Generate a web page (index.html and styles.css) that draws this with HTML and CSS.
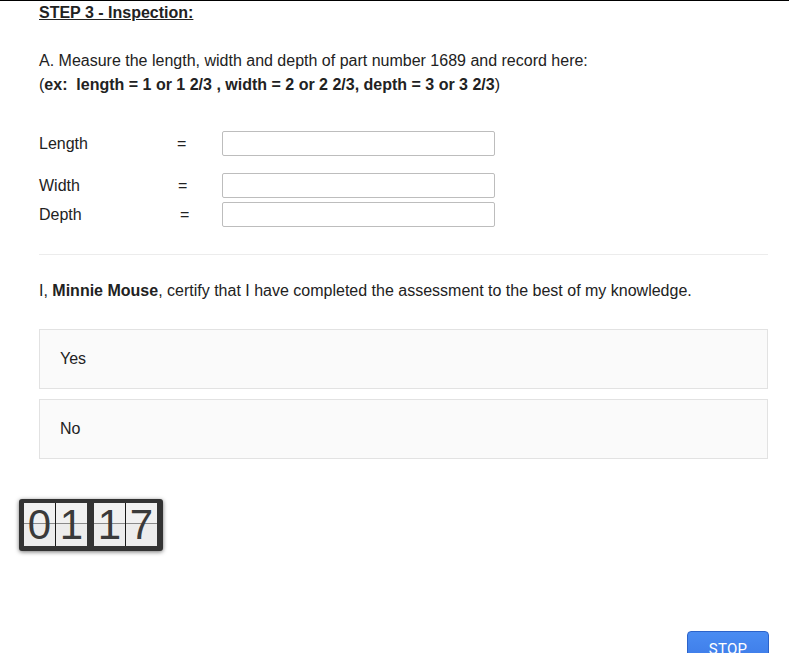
FILE: index.html
```html
<!DOCTYPE html>
<html>
<head>
<meta charset="utf-8">
<link rel="stylesheet" href="styles.css">
</head>
<body>
<div class="page">
  <h3 class="step">STEP 3 - Inspection:</h3>
  <p class="intro">A. Measure the length, width and depth of part number 1689 and record here:<br>(<b>ex:&nbsp; length = 1 or 1 2/3 , width = 2 or 2 2/3, depth = 3 or 3 2/3</b>)</p>

  <div class="row row-length">
    <span class="label">Length</span><span class="eq">=</span><input class="field" type="text">
  </div>
  <div class="row row-width">
    <span class="label">Width</span><span class="eq eq-w">=</span><input class="field" type="text">
  </div>
  <div class="row row-depth">
    <span class="label">Depth</span><span class="eq eq-d">=</span><input class="field" type="text">
  </div>

  <hr class="sep">

  <p class="cert">I, <b>Minnie Mouse</b>, certify that I have completed the assessment to the best of my knowledge.</p>

  <div class="option">Yes</div>
  <div class="option option-no">No</div>

  <div class="timer">
    <div class="group">
      <span class="digit">0</span><span class="digit">1</span>
    </div>
    <div class="group">
      <span class="digit">1</span><span class="digit">7</span>
    </div>
  </div>

  <div class="actions">
    <button class="stop" type="button">STOP</button>
  </div>
</div>
</body>
</html>
```
FILE: styles.css
```css
html, body {
  margin: 0;
  padding: 0;
  background: #fff;
}
body {
  border-top: 1px solid #000;
  font-family: "Liberation Sans", Arial, sans-serif;
  color: #222;
  overflow: hidden;
}
.page {
  padding: 0 21px 0 39px;
}
.step {
  margin: 3px 0 0;
  font-size: 16px;
  line-height: 18px;
  font-weight: bold;
  text-decoration: underline;
}
.intro {
  margin: 27px 0 0;
  font-size: 16px;
  line-height: 24px;
}
.row {
  display: flex;
  align-items: center;
  height: 25px;
  font-size: 16px;
}
.row-length { margin-top: 34px; }
.row-width { margin-top: 17px; }
.row-depth { margin-top: 4px; }
.label {
  width: 138px;
}
.eq {
  width: 45px;
}
.eq-w { padding-left: 1px; width: 44px; }
.eq-d { padding-left: 3px; width: 42px; }
.field {
  box-sizing: border-box;
  width: 273px;
  height: 25px;
  margin: 0;
  border: 1px solid #bdbdbd;
  border-radius: 2px;
  background: #fff;
  padding: 0 4px;
  font: 14px "Liberation Sans", Arial, sans-serif;
}
.sep {
  margin: 27px 0 0;
  border: 0;
  border-top: 1px solid #ececec;
  height: 0;
}
.cert {
  margin: 24px 0 0;
  font-size: 16px;
  line-height: 24px;
}
.option {
  box-sizing: border-box;
  margin-top: 26px;
  height: 60px;
  border: 1px solid #e2e2e2;
  background: #fafafa;
  padding-left: 20px;
  display: flex;
  align-items: center;
  font-size: 16px;
}
.option-no { margin-top: 10px; }
.timer {
  margin: 40px 0 0 -20px;
  box-sizing: border-box;
  width: 144px;
  height: 52px;
  padding: 4px 6px 5px 5px;
  background: #333;
  border-radius: 3px;
  box-shadow: 0 1px 4px rgba(0,0,0,0.55);
  display: flex;
  gap: 7px;
}
.group {
  display: flex;
  gap: 1px;
  background: #1a1a1a;
}
.digit {
  width: 31px;
  height: 43px;
  background: linear-gradient(#f1f1f1 0, #f1f1f1 20px, #8a8a8a 20px, #8a8a8a 21px, #ececec 21px);
  color: #3a3a3a;
  font-family: "Liberation Sans", Arial, sans-serif;
  font-size: 42px;
  line-height: 43px;
  text-align: center;
}
.actions {
  margin-top: 80px;
  display: flex;
  justify-content: flex-end;
}
.stop {
  width: 82px;
  height: 36px;
  margin-right: -1px;
  border: 1px solid #2c63c9;
  border-radius: 4px;
  background: linear-gradient(#4a8cf2, #3a78e6);
  color: #fff;
  font-family: Roboto, "Liberation Sans", sans-serif;
  font-size: 15px;
  letter-spacing: 0.3px;
  padding: 0;
}
```
